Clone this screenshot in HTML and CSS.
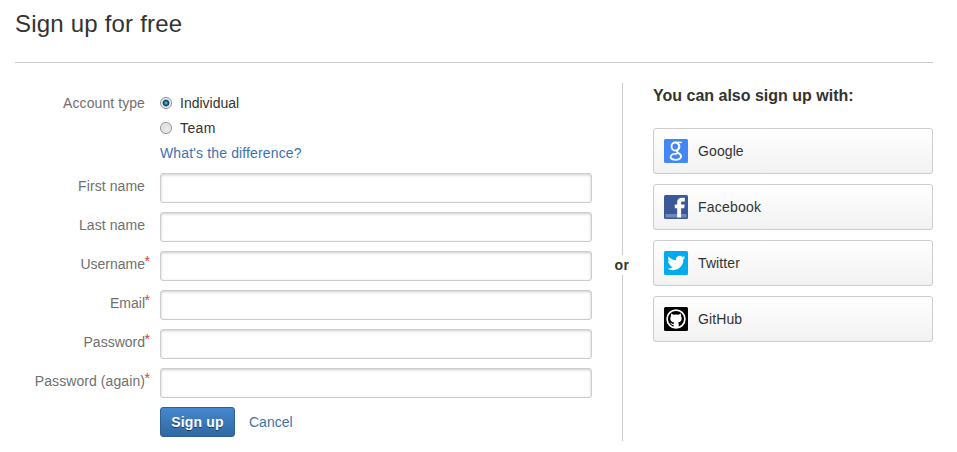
FILE: index.html
```html
<!DOCTYPE html>
<html lang="en">
<head>
<meta charset="utf-8">
<title>Sign up for free</title>
<link rel="stylesheet" href="styles.css">
</head>
<body>
<main class="page">
  <header class="page-header"><h1>Sign up for free</h1></header>
  <div class="columns">
    <form class="signup">
      <div class="row account">
        <span class="label wide">Account type</span>
        <div class="options">
          <label class="option"><input type="radio" name="type" checked><span>Individual</span></label>
          <label class="option team"><input type="radio" name="type"><span>Team</span></label>
          <a class="hint" href="#">What's the difference?</a>
        </div>
      </div>
      <div class="row"><label class="label wide" for="first">First name</label><input class="field" id="first" type="text"></div>
      <div class="row"><label class="label wide" for="last">Last name</label><input class="field" id="last" type="text"></div>
      <div class="row"><label class="label" for="user">Username<span class="required">*</span></label><input class="field" id="user" type="text"></div>
      <div class="row"><label class="label" for="email">Email<span class="required">*</span></label><input class="field" id="email" type="text"></div>
      <div class="row"><label class="label" for="pass">Password<span class="required">*</span></label><input class="field" id="pass" type="password"></div>
      <div class="row"><label class="label wide" for="again">Password (again)<span class="required">*</span></label><input class="field" id="again" type="password"></div>
      <div class="actions"><button class="submit" type="button">Sign up</button><a href="#">Cancel</a></div>
    </form>
    <div class="divider"><span>or</span></div>
    <section class="social">
      <h2>You can also sign up with:</h2>
      <a class="provider" href="#">
        <svg width="24" height="24" viewBox="0 0 24 24"><rect width="24" height="24" rx="1.5" fill="#4387f5"/><g fill="none" stroke="#fff"><ellipse cx="11.2" cy="7.5" rx="3.7" ry="4" stroke-width="1.8"/><path d="M11.2 3.4H17.8" stroke-width="1.4"/><path d="M13.8 4.2C16.6 7 15.5 9.6 13.6 11.1C11.8 12.5 13.2 13.2 14.8 14.2C19.4 17.2 16.4 20.8 11.7 20.8C6.8 20.8 5.6 18.4 7.2 16.5C8.4 15.1 10.8 14.7 13.5 14.7" stroke-width="1.8"/></g></svg>
        <span>Google</span>
      </a>
      <a class="provider facebook" href="#">
        <svg width="24" height="24" viewBox="0 0 24 24"><rect width="24" height="24" rx="1.5" fill="#3b5998"/><path d="M1.5 19H22.5V22.5H1.5Z" fill="#718abd"/><path d="M13.2 22.5V13.2H10.8V9.5H13.2V7.3C13.2 4.3 14.8 2.8 17.8 2.8H20.8V6.4H18.8C17.5 6.4 17.1 6.9 17.1 8V9.5H20.7L20.2 13.2H17.1V22.5Z" fill="#fff"/></svg>
        <span>Facebook</span>
      </a>
      <a class="provider" href="#">
        <svg width="24" height="24" viewBox="0 0 24 24"><rect width="24" height="24" rx="1.5" fill="#00aced"/><path transform="translate(3.4 3.1) scale(.74)" d="M23.95 4.57a10 10 0 0 1-2.82.77 4.96 4.96 0 0 0 2.16-2.72 9.9 9.9 0 0 1-3.12 1.19 4.92 4.92 0 0 0-8.39 4.48A13.93 13.93 0 0 1 1.64 3.16a4.92 4.92 0 0 0 1.52 6.57 4.9 4.9 0 0 1-2.23-.61v.06a4.92 4.92 0 0 0 3.95 4.83 5 5 0 0 1-2.21.08 4.94 4.94 0 0 0 4.6 3.42A9.87 9.87 0 0 1 0 19.54a13.99 13.99 0 0 0 7.55 2.21c9.05 0 14-7.5 14-13.98 0-.21 0-.42-.02-.63a9.94 9.94 0 0 0 2.46-2.55z" fill="#fff"/></svg>
        <span>Twitter</span>
      </a>
      <a class="provider" href="#">
        <svg width="24" height="24" viewBox="0 0 24 24"><rect width="24" height="24" rx="1.5" fill="#000"/><circle cx="12" cy="12" r="8.9" fill="none" stroke="#fff" stroke-width="1.7"/><path d="M7.2 6.5L9.5 7.7Q12 7.2 14.5 7.7L16.8 6.5L17.1 9.2C18.5 11.8 17.4 15 14 15.4C14.8 16 14.8 17 14.8 20.3H9.6V18C7.2 18.4 7.1 16.3 6 15.8C7.9 15.5 7.8 17.4 9.6 17L10.2 15.4C6.6 15 5.5 11.8 6.9 9.2Z" fill="#fff"/></svg>
        <span>GitHub</span>
      </a>
    </section>
  </div>
</main>
</body>
</html>
```
FILE: styles.css
```css
* { box-sizing: border-box; }
body { margin: 0; background: #fff; color: #333; font: 14px/20px "Liberation Sans", Arial, sans-serif; }
a { color: #3b73af; text-decoration: none; }
.page { width: 918px; margin-left: 15px; }
.page-header { height: 63px; padding-top: 9px; border-bottom: 1px solid #ccc; }
h1 { margin: 0; font-size: 24px; line-height: 30px; font-weight: 400; letter-spacing: .2px; }
.columns { display: flex; padding-top: 20px; }
.signup { width: 577px; padding-top: 10px; }
.row { display: flex; gap: 15px; height: 30px; margin-bottom: 9px; }
.row.account { height: 70px; margin-bottom: 10px; }
.label { width: 130px; flex: none; color: #707070; text-align: right; padding-top: 3px; white-space: nowrap; }
.label.wide { letter-spacing: .08px; }
.account .label { padding-top: 0; }
.required { display: inline-block; width: 6px; margin-right: -6px; color: #d04437; position: relative; top: -3px; left: -1px; }
.options { display: flex; flex-direction: column; gap: 5px; }
.option { display: flex; align-items: center; gap: 8px; height: 20px; }
.option.team { letter-spacing: .4px; }
.option input { appearance: none; width: 12px; height: 12px; margin: 0; border: 1px solid #8e8f8f; border-radius: 50%; background: radial-gradient(circle at 60% 60%, #eee, #ccc); box-shadow: inset 0 0 0 1px #f4f4f4; }
.option input:checked { background: radial-gradient(circle at 50% 50%, #7fd0ee 0, #2b88b5 1.2px, #0d415f 2.8px, #cfd5d8 3.8px, #eee 5px); }
.hint { height: 20px; letter-spacing: .14px; }
.field { width: 432px; height: 30px; border: 1px solid #ccc; border-radius: 3px; background: #fff; box-shadow: inset 0 1px 3px #ccc; }
.actions { display: flex; align-items: center; gap: 14px; margin-left: 145px; height: 30px; }
.submit { width: 75px; height: 30px; padding: 0; border: 1px solid #2e5f94; border-radius: 3px; background: linear-gradient(#4687ce, #3068a2); color: #fff; font: bold 14px/20px "Liberation Sans", Arial, sans-serif; letter-spacing: .2px; text-shadow: 0 1px 0 rgba(0,0,0,.5); }
.divider { width: 61px; height: 358px; display: flex; align-items: center; justify-content: center; font-weight: 700; background: linear-gradient(#ccc, #ccc) 30px 0 / 1px 100% no-repeat; }
.divider span { background: #fff; margin: 6px 1px 0 0; line-height: 20px; letter-spacing: .4px; }
.social { width: 280px; padding-top: 3px; }
h2 { margin: 0 0 22px; font-size: 16px; line-height: 20px; }
.provider { display: flex; align-items: center; gap: 10px; height: 46px; padding: 0 10px; margin-bottom: 10px; border: 1px solid #ccc; border-radius: 3px; background: linear-gradient(#fff, #f2f2f2); color: #333; letter-spacing: .1px; }
.provider.facebook { letter-spacing: .2px; }
```
